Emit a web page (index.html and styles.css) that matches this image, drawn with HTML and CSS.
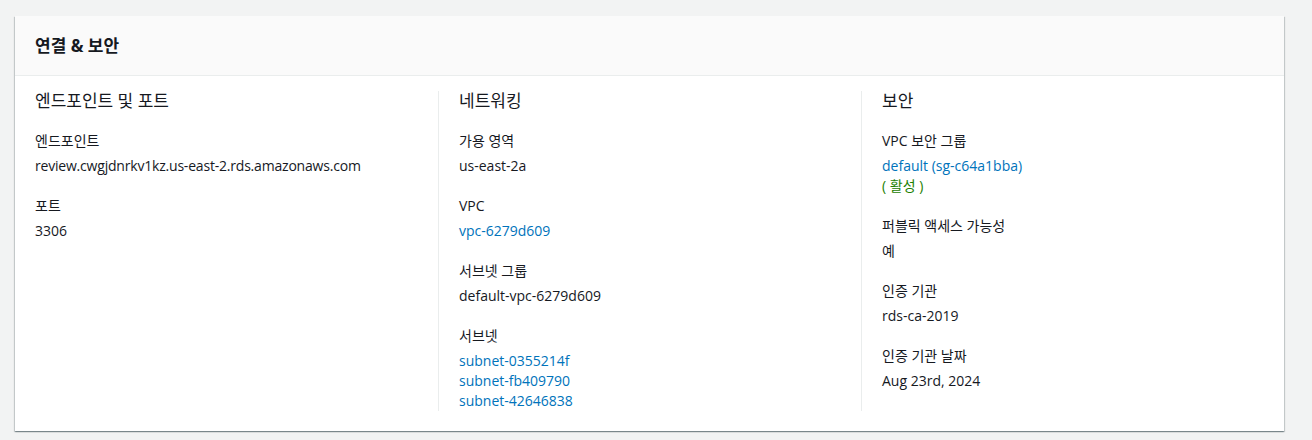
FILE: index.html
```html
<!DOCTYPE html>
<html lang="ko">
<head>
<meta charset="utf-8">
<link rel="stylesheet" href="styles.css">
</head>
<body>
<div class="card">
  <div class="card-header"><h2>연결 &amp; 보안</h2></div>
  <div class="card-body">
    <div class="col">
      <h3>엔드포인트 및 포트</h3>
      <div class="item"><div class="label">엔드포인트</div><div class="value endpoint">review.cwgjdnrkv1kz.us-east-2.rds.amazonaws.com</div></div>
      <div class="item"><div class="label">포트</div><div class="value">3306</div></div>
    </div>
    <div class="col">
      <h3>네트워킹</h3>
      <div class="item"><div class="label">가용 영역</div><div class="value">us-east-2a</div></div>
      <div class="item"><div class="label">VPC</div><div class="value"><a href="#">vpc-6279d609</a></div></div>
      <div class="item"><div class="label">서브넷 그룹</div><div class="value">default-vpc-6279d609</div></div>
      <div class="item"><div class="label">서브넷</div><div class="value"><a href="#">subnet-0355214f</a><br><a href="#">subnet-fb409790</a><br><a href="#">subnet-42646838</a></div></div>
    </div>
    <div class="col">
      <h3>보안</h3>
      <div class="item"><div class="label">VPC 보안 그룹</div><div class="value"><a href="#">default (sg-c64a1bba)</a><br><span class="ok">( 활성 )</span></div></div>
      <div class="item"><div class="label">퍼블릭 액세스 가능성</div><div class="value">예</div></div>
      <div class="item"><div class="label">인증 기관</div><div class="value">rds-ca-2019</div></div>
      <div class="item"><div class="label">인증 기관 날짜</div><div class="value">Aug 23rd, 2024</div></div>
    </div>
  </div>
</div>
</body>
</html>
```
FILE: styles.css
```css
html, body { margin: 0; padding: 0; }
body {
  background: #f2f3f3;
  font-family: "Open Sans", "Noto Sans CJK KR", sans-serif;
  color: #16191f;
  font-size: 14px;
  padding: 16px 0 0 15px;
  height: 440px;
  box-sizing: border-box;
}
.card {
  width: 1269px;
  background: #fff;
  box-shadow: 0 1px 1px 0 rgba(0,28,36,.3), 1px 1px 1px 0 rgba(0,28,36,.15), -1px 1px 1px 0 rgba(0,28,36,.15);
}
.card-header {
  background: #fafafa;
  border-bottom: 1px solid #eaeded;
  padding: 19px 20px 18px;
}
.card-header h2 {
  margin: 0;
  font-size: 17px;
  line-height: 22px;
  font-weight: 700;
}
.card-body {
  display: grid;
  grid-template-columns: repeat(3, 1fr);
  padding: 15px 0 20px;
}
.col {
  padding: 0 20px;
  border-left: 1px solid #eaeded;
}
.col:first-child { border-left: none; }
.col h3 {
  margin: 0 0 20px;
  font-size: 17px;
  line-height: 20px;
  font-weight: 400;
}
.item { margin-bottom: 20px; }
.item:last-child { margin-bottom: 0; }
.label {
  color: #16191f;
  line-height: 20px;
  margin-bottom: 5px;
}
.value { line-height: 20px; }
.endpoint { letter-spacing: -0.2px; }
a { color: #0073bb; text-decoration: none; }
.ok { color: #1d8102; }
```
